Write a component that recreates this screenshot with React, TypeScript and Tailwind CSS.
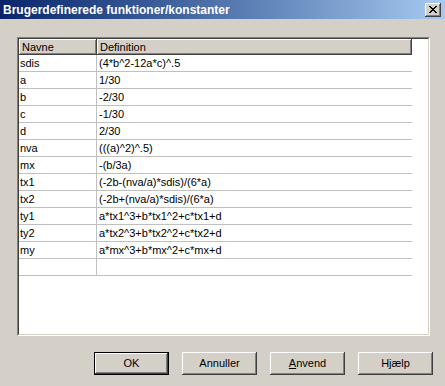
import React from "react";

const rows: [string, string][] = [
  ["sdis", "(4*b^2-12a*c)^.5"],
  ["a", "1/30"],
  ["b", "-2/30"],
  ["c", "-1/30"],
  ["d", "2/30"],
  ["nva", "(((a)^2)^.5)"],
  ["mx", "-(b/3a)"],
  ["tx1", "(-2b-(nva/a)*sdis)/(6*a)"],
  ["tx2", "(-2b+(nva/a)*sdis)/(6*a)"],
  ["ty1", "a*tx1^3+b*tx1^2+c*tx1+d"],
  ["ty2", "a*tx2^3+b*tx2^2+c*tx2+d"],
  ["my", "a*mx^3+b*mx^2+c*mx+d"],
  ["", ""],
];

const raised =
  "shadow-[inset_-1px_-1px_#404040,inset_1px_1px_#ffffff,inset_-2px_-2px_#808080,inset_2px_2px_#d4d0c8]";

function Button({ children, isDefault }: { children: React.ReactNode; isDefault?: boolean }) {
  return (
    <div
      className={`w-[75px] h-[23px] flex items-center justify-center bg-[#d4d0c8] text-black ${
        isDefault ? "border border-black" : ""
      } ${raised}`}
    >
      <span className="leading-none">{children}</span>
    </div>
  );
}

export default function App() {
  return (
    <div
      className="w-[445px] h-[386px] bg-[#d4d0c8] flex flex-col text-[11px] text-black overflow-hidden"
      style={{ fontFamily: '"Liberation Sans", Arial, sans-serif' }}
    >
      {/* Title bar */}
      <div className="h-[19px] flex items-center justify-between bg-gradient-to-r from-[#0a246a] to-[#a6caf0] pl-[3px] pr-[4px]">
        <span className="text-white font-bold text-[12px] leading-none">
          Brugerdefinerede funktioner/konstanter
        </span>
        <div className={`w-[16px] h-[14px] bg-[#d4d0c8] flex items-center justify-center ${raised}`}>
          <svg width="8" height="7" viewBox="0 0 8 7" shapeRendering="crispEdges">
            <path
              d="M0 0h2v1H0zM6 0h2v1H6zM1 1h2v1H1zM5 1h2v1H5zM2 2h4v1H2zM3 3h2v1H3zM2 4h4v1H2zM1 5h2v1H1zM5 5h2v1H5zM0 6h2v1H0zM6 6h2v1H6z"
              fill="#000"
            />
          </svg>
        </div>
      </div>

      {/* Grid panel */}
      <div className="ml-[17px] mt-[18px] w-[413px] h-[299px] border border-t-[#808080] border-l-[#808080] border-b-white border-r-white">
        <div className="w-full h-full border border-t-[#404040] border-l-[#404040] border-b-[#d4d0c8] border-r-[#d4d0c8] bg-white flex flex-col">
          <div className="w-[393px]">
            <div className="flex h-[16px]">
              <div className={`w-[78px] bg-[#d4d0c8] flex items-center pl-[3px] ${raised}`}>Navne</div>
              <div className={`flex-1 bg-[#d4d0c8] flex items-center pl-[3px] ${raised}`}>Definition</div>
            </div>
            {rows.map(([name, def], i) => (
              <div key={i} className="flex h-[17px] border-b border-[#c0c0c0]">
                <div className="w-[78px] border-r border-[#c0c0c0] pl-[1px] flex items-center">{name}</div>
                <div className="flex-1 pl-[2px] flex items-center">{def}</div>
              </div>
            ))}
          </div>
        </div>
      </div>

      {/* Buttons */}
      <div className="flex justify-end gap-[13px] pr-[12px] mt-[16px]">
        <Button isDefault>OK</Button>
        <Button>Annuller</Button>
        <Button>
          <span className="underline">A</span>nvend
        </Button>
        <Button>Hjælp</Button>
      </div>
    </div>
  );
}
